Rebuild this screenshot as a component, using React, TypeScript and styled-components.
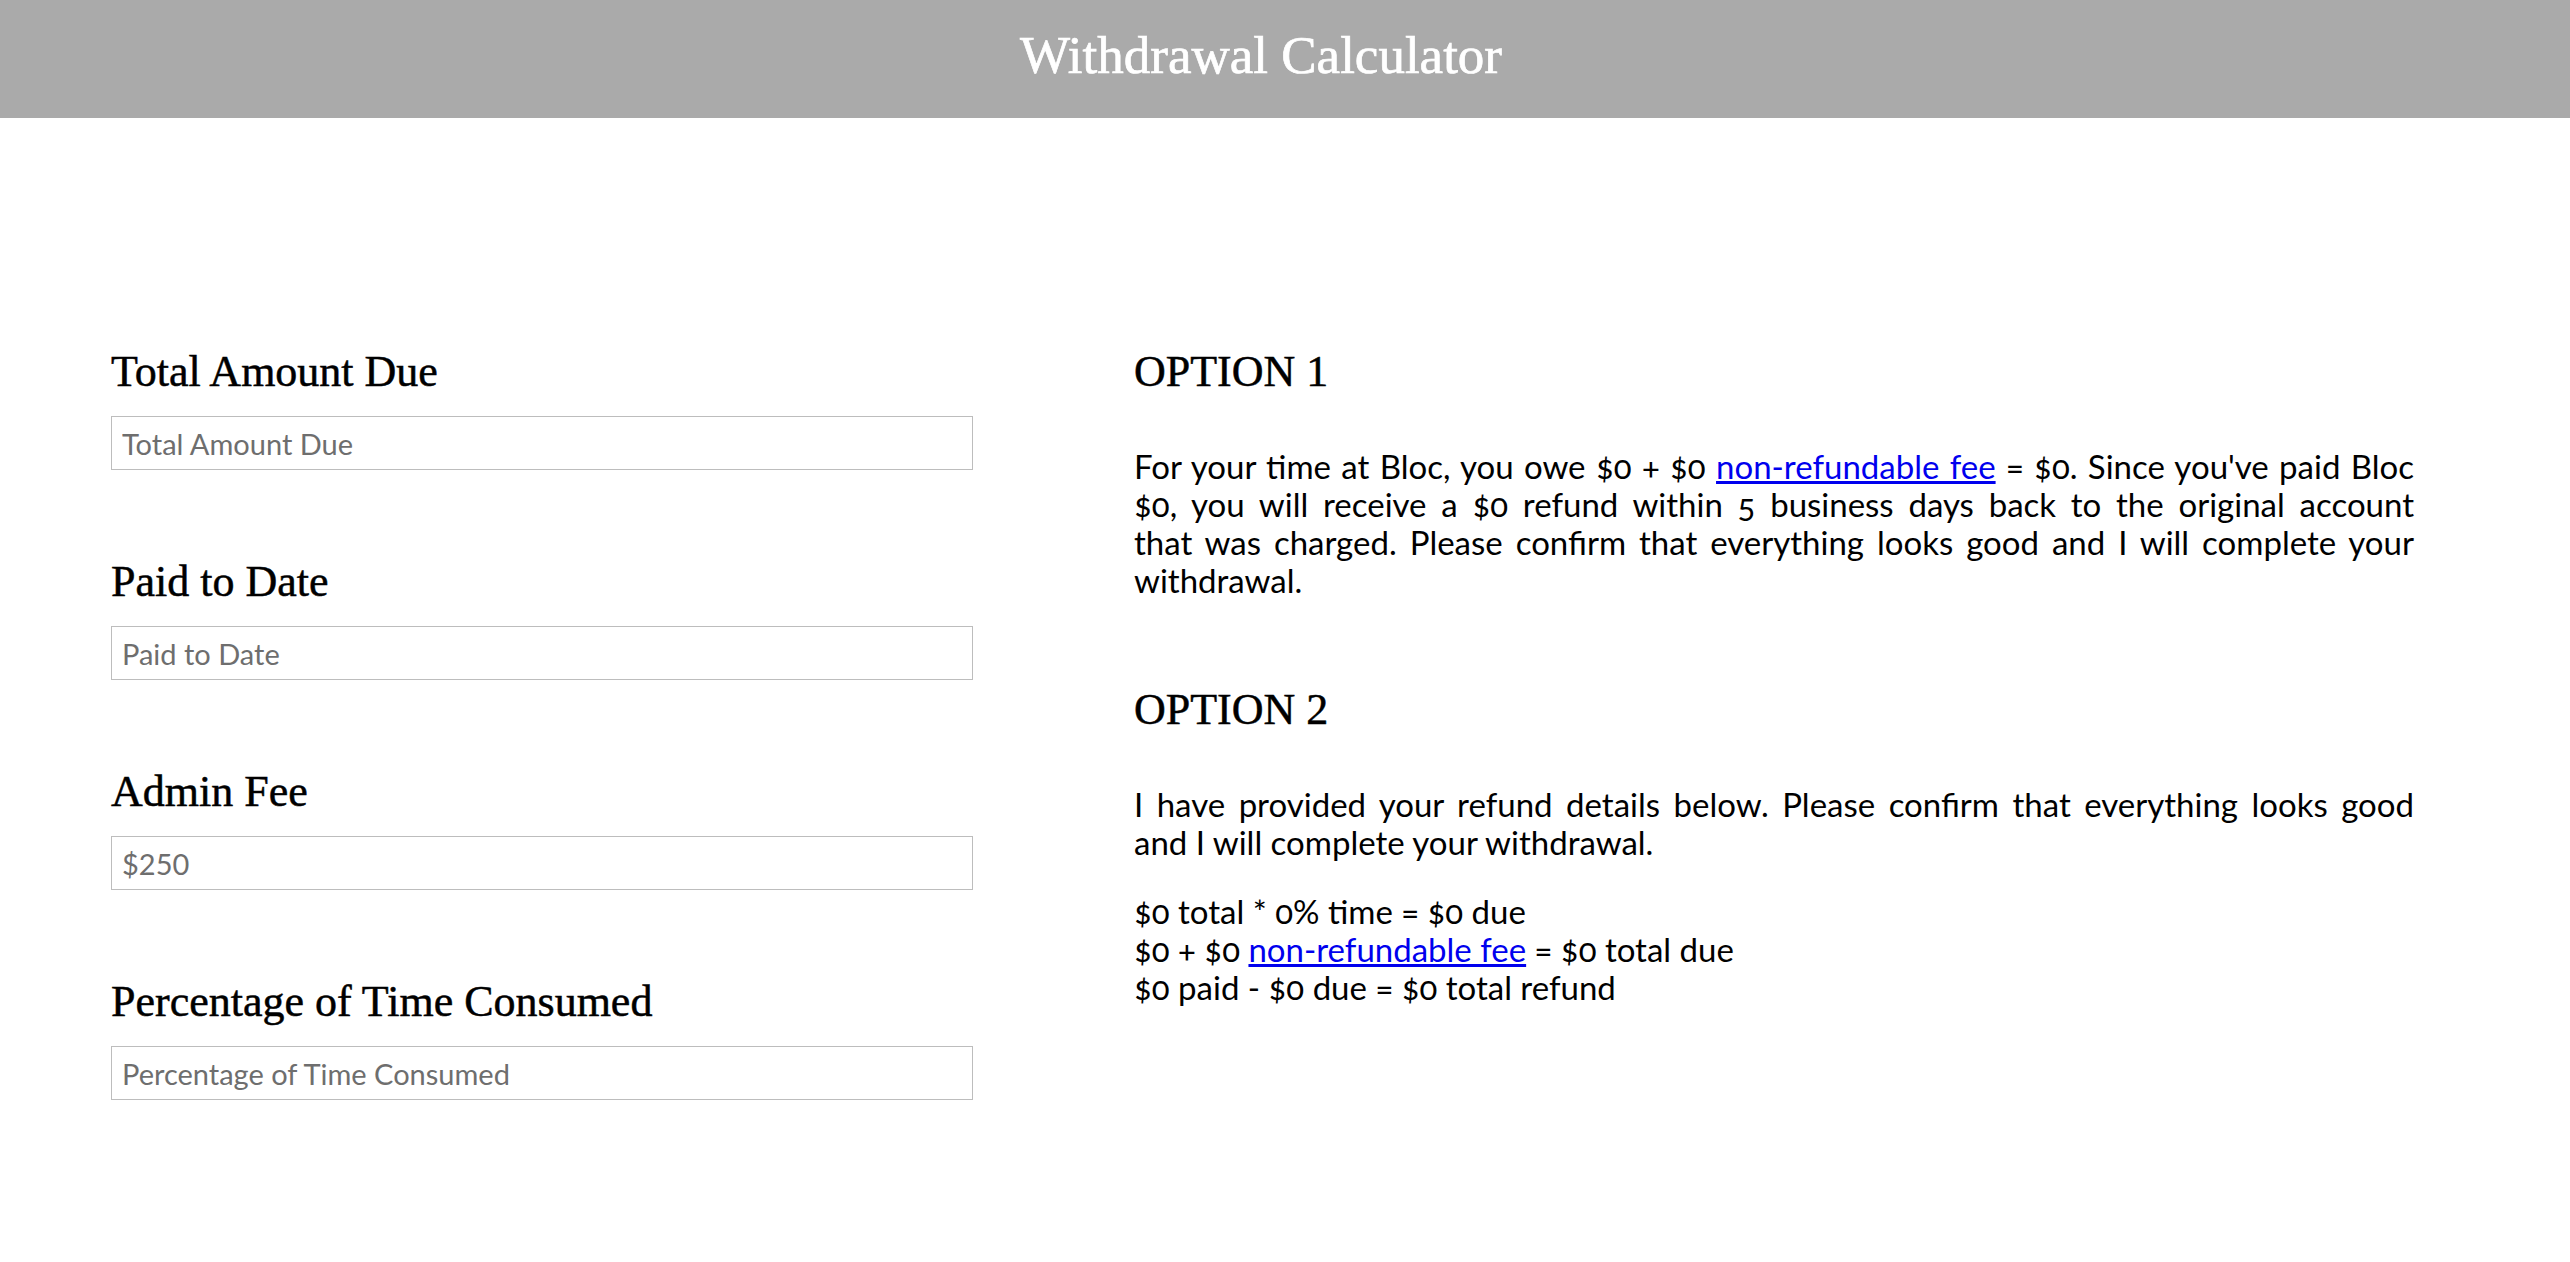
import React from "react";
import styled, { createGlobalStyle } from "styled-components";

const Global = createGlobalStyle`
  html, body { margin: 0; padding: 0; background: #ffffff; }
  body { font-family: "Lato", "Open Sans", sans-serif; color: #000; }
  * { box-sizing: border-box; }
`;

const Header = styled.header`
  height: 118px;
  background: #aaaaaa;
  display: flex;
  justify-content: center;
  align-items: flex-start;
  padding: 29px 48px 0 0;
`;

const Title = styled.h1`
  margin: 0;
  font-family: "Liberation Serif", "DejaVu Serif", serif;
  font-weight: 400;
  font-size: 53px;
  line-height: 53px;
  color: #ffffff;
  -webkit-text-stroke: 0.7px #ffffff;
`;

const Main = styled.main`
  display: flex;
  align-items: flex-start;
  padding: 228px 0 0 111px;
`;

const Form = styled.form`
  width: 862px;
  display: flex;
  flex-direction: column;
  gap: 86px;
`;

const Field = styled.label`
  display: flex;
  flex-direction: column;
  gap: 18px;
`;

const Heading = styled.h2`
  margin: 0;
  font-family: "Liberation Serif", "DejaVu Serif", serif;
  font-weight: 400;
  font-size: 44px;
  line-height: 52px;
  color: #000;
  -webkit-text-stroke: 0.5px #000;
`;

const Input = styled.input`
  width: 100%;
  height: 54px;
  border: 1px solid #bdbdbd;
  border-radius: 0;
  padding: 0 10px;
  font-family: "Lato", "Open Sans", sans-serif;
  font-size: 29px;
  color: #333;
  background: #fff;
  outline: none;
  &::placeholder {
    color: #6e6e6e;
    opacity: 1;
  }
`;

const Results = styled.section`
  width: 1280px;
  margin-left: 161px;
  display: flex;
  flex-direction: column;
  gap: 85px;
`;

const Option = styled.article`
  display: flex;
  flex-direction: column;
`;

const OptionHeading = styled(Heading)`
  margin-bottom: 49px;
`;

const Para = styled.p<{ $justify?: boolean; $spaced?: boolean }>`
  margin: 0 0 ${(p) => (p.$spaced ? "31px" : "0")};
  font-family: "Lato", "Open Sans", sans-serif;
  font-size: 33px;
  line-height: 38px;
  font-variant-numeric: oldstyle-nums;
  text-align: ${(p) => (p.$justify ? "justify" : "left")};
  color: #000;
`;

const FeeLink = styled.a`
  color: #0000ee;
  text-decoration: underline;
`;

const fields = [
  { label: "Total Amount Due", placeholder: "Total Amount Due" },
  { label: "Paid to Date", placeholder: "Paid to Date" },
  { label: "Admin Fee", placeholder: "$250" },
  { label: "Percentage of Time Consumed", placeholder: "Percentage of Time Consumed" },
];

export default function App() {
  return (
    <>
      <Global />
      <Header>
        <Title>Withdrawal Calculator</Title>
      </Header>
      <Main>
        <Form onSubmit={(e) => e.preventDefault()}>
          {fields.map((f) => (
            <Field key={f.label}>
              <Heading>{f.label}</Heading>
              <Input type="text" placeholder={f.placeholder} />
            </Field>
          ))}
        </Form>
        <Results>
          <Option>
            <OptionHeading>OPTION 1</OptionHeading>
            <Para $justify>
              For your time at Bloc, you owe $0 + $0 <FeeLink href="#">non-refundable fee</FeeLink> = $0. Since
              you've paid Bloc $0, you will receive a $0 refund within 5 business days back to the original account
              that{"\u00a0"}was charged. Please confirm that everything looks good and I will complete your withdrawal.
            </Para>
          </Option>
          <Option>
            <OptionHeading>OPTION 2</OptionHeading>
            <Para $justify $spaced>
              I have provided your refund details below. Please confirm that everything looks good and I will
              complete your withdrawal.
            </Para>
            <Para>
              $0 total * 0% time = $0 due
              <br />
              $0 + $0 <FeeLink href="#">non-refundable fee</FeeLink> = $0 total due
              <br />
              $0 paid - $0 due = $0 total refund
            </Para>
          </Option>
        </Results>
      </Main>
    </>
  );
}
